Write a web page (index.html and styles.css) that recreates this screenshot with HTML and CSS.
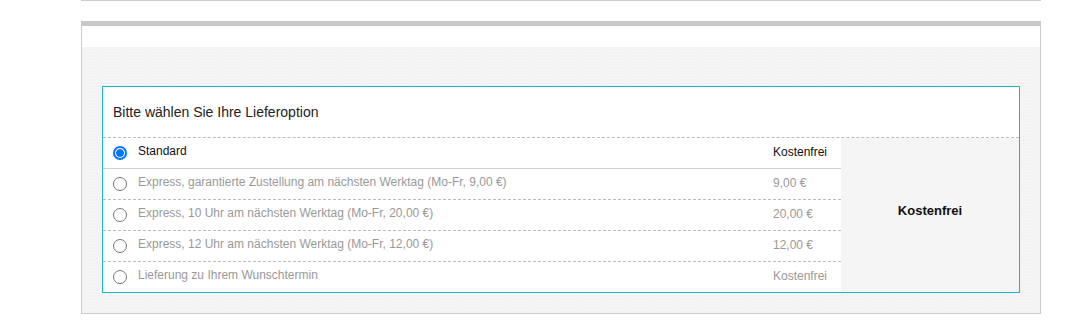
FILE: index.html
```html
<!DOCTYPE html>
<html lang="de">
<head>
  <meta charset="UTF-8" />
  <meta name="viewport" content="width=device-width, initial-scale=1.0"/>
  <title>Lieferoption</title>
  <link rel="stylesheet" href="styles.css">
</head>
<body>

  <div class="page">
    <div class="top-rule"></div>

    <div class="shipping-box">
      <div class="shipping-band"></div>

      <div class="shipping-area">
        <div class="delivery">
          <div class="delivery-head">Bitte wählen Sie Ihre Lieferoption</div>

          <div class="delivery-body">
            <div class="options">
              <label class="option selected">
                <input type="radio" name="delivery" checked />
                <span class="option-name">Standard</span>
                <span class="option-price">Kostenfrei</span>
              </label>
              <label class="option">
                <input type="radio" name="delivery" />
                <span class="option-name">Express, garantierte Zustellung am nächsten Werktag (Mo-Fr, 9,00 €)</span>
                <span class="option-price">9,00 €</span>
              </label>
              <label class="option">
                <input type="radio" name="delivery" />
                <span class="option-name">Express, 10 Uhr am nächsten Werktag (Mo-Fr, 20,00 €)</span>
                <span class="option-price">20,00 €</span>
              </label>
              <label class="option">
                <input type="radio" name="delivery" />
                <span class="option-name">Express, 12 Uhr am nächsten Werktag (Mo-Fr, 12,00 €)</span>
                <span class="option-price">12,00 €</span>
              </label>
              <label class="option">
                <input type="radio" name="delivery" />
                <span class="option-name">Lieferung zu Ihrem Wunschtermin</span>
                <span class="option-price">Kostenfrei</span>
              </label>
            </div>

            <div class="summary">Kostenfrei</div>
          </div>
        </div>
      </div>
    </div>
  </div>

</body>
</html>
```

FILE: styles.css
```css
body {
  margin: 0;
  background: #ffffff;
  font-family: Arial, "Liberation Sans", sans-serif;
}

.page {
  width: 960px;
  margin-left: 81px;
}

.top-rule {
  border-top: 1px solid #cccccc;
  height: 20px;
}

.shipping-box {
  border: 1px solid #cccccc;
  border-top: 5px solid #c8c8c8;
}

.shipping-band {
  height: 21px;
  background: #ffffff;
}

.shipping-area {
  padding: 39px 20px 20px;
  background-color: #f3f3f3;
  background-image: radial-gradient(circle, #fafafa 0.6px, transparent 0.9px);
  background-size: 3px 3px;
}

.delivery {
  border: 1px solid #1cb5c6;
  background: #ffffff;
}

.delivery-head {
  height: 50px;
  padding-left: 10px;
  display: flex;
  align-items: center;
  font-size: 14px;
  color: #222222;
  border-bottom: 1px dashed #bbbbbb;
}

.delivery-body {
  display: flex;
}

.options {
  width: 738px;
}

.option {
  height: 30px;
  display: flex;
  align-items: center;
  padding-left: 10px;
  font-size: 12px;
  color: #999999;
  border-bottom: 1px dashed #bbbbbb;
  cursor: pointer;
}

.option:last-child {
  border-bottom: none;
}

.option.selected {
  color: #111111;
  border-bottom: 1px solid #d0d0d0;
}

.option input {
  appearance: none;
  box-sizing: border-box;
  width: 14px;
  height: 14px;
  margin: 0 11px 0 0;
  border: 1px solid #767676;
  border-radius: 50%;
  background: #ffffff;
}

.option input:checked {
  border: 2px solid #0075ff;
  background: radial-gradient(circle, #0075ff 0 3.6px, #ffffff 4.2px);
}

.option-name {
  flex: 1;
  padding-bottom: 4px;
}

.option-price {
  width: 68px;
  padding-bottom: 2px;
}

.summary {
  flex: 1;
  display: flex;
  align-items: center;
  justify-content: center;
  padding-bottom: 10px;
  background: #f5f5f5;
  font-size: 13px;
  font-weight: bold;
  color: #111111;
}
```
